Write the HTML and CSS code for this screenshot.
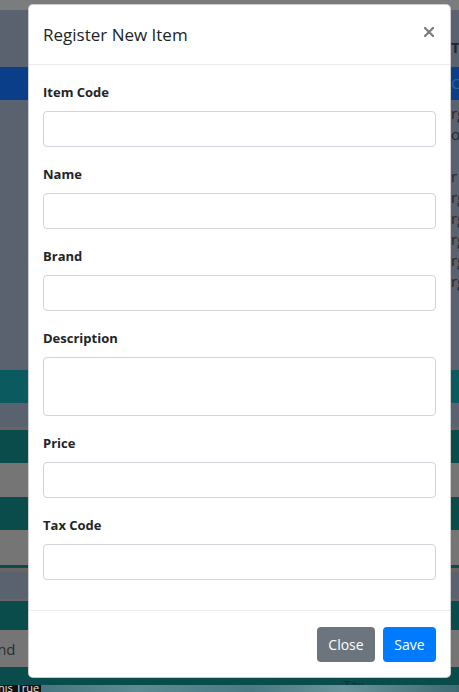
FILE: index.html
```html
<!DOCTYPE html>
<html>
<head>
<meta charset="utf-8">
<link rel="stylesheet" href="styles.css">
</head>
<body>
<div class="page">
  <div class="band gray-top"></div>
  <div class="band slate head-row"><span class="frag bold">T</span></div>
  <div class="band blue"><span class="frag light">C</span></div>
  <div class="band slate list">
    <span class="frag">rg</span>
    <span class="frag">or</span>
    <span class="frag">&nbsp;</span>
    <span class="frag">r</span>
    <span class="frag">rg</span>
    <span class="frag">rg</span>
    <span class="frag">rg</span>
    <span class="frag">rg</span>
    <span class="frag">rg</span>
  </div>
  <div class="band teal h33"></div>
  <div class="band slate h24"></div>
  <div class="band brown h3"></div>
  <div class="band dteal h33"></div>
  <div class="band gray h34"></div>
  <div class="band dteal h33"></div>
  <div class="band gray h35"></div>
  <div class="band dteal h3"></div>
  <div class="band brown h4"></div>
  <div class="band slate h27"></div>
  <div class="band brown h2"></div>
  <div class="band dteal h29"></div>
  <div class="band gray h37 cell"><span class="cut">Brand</span></div>
  <div class="band dteal h18"><span class="tax">Tax</span></div>
  <div class="band photo"><span class="tag">This True</span></div>
</div>

<div class="modal">
  <div class="modal-header">
    <h5 class="modal-title">Register New Item</h5>
    <button class="close" type="button" aria-label="Close">
      <svg width="10" height="10" viewBox="0 0 10 10"><path d="M1 1L9 9M9 1L1 9" stroke="#7a7a7a" stroke-width="2.2" stroke-linecap="square"/></svg>
    </button>
  </div>
  <div class="modal-body">
    <div class="form-group">
      <label>Item Code</label>
      <input class="form-control" type="text">
    </div>
    <div class="form-group">
      <label>Name</label>
      <input class="form-control" type="text">
    </div>
    <div class="form-group">
      <label>Brand</label>
      <input class="form-control" type="text">
    </div>
    <div class="form-group">
      <label>Description</label>
      <textarea class="form-control area"></textarea>
    </div>
    <div class="form-group">
      <label>Price</label>
      <input class="form-control" type="text">
    </div>
    <div class="form-group">
      <label>Tax Code</label>
      <input class="form-control" type="text">
    </div>
  </div>
  <div class="modal-footer">
    <button class="btn btn-secondary" type="button">Close</button>
    <button class="btn btn-primary" type="button">Save</button>
  </div>
</div>
</body>
</html>
```

FILE: styles.css
```css
* { box-sizing: border-box; }
html, body {
  margin: 0;
  padding: 0;
  width: 459px;
  height: 692px;
  overflow: hidden;
  font-family: "Open Sans", "Noto Sans", sans-serif;
}
.page {
  display: flex;
  flex-direction: column;
  width: 459px;
}
.band { width: 100%; overflow: hidden; white-space: nowrap; }
.gray-top { height: 10px; background: #7b7c7e; }
.slate { background: #5a626f; }
.blue { height: 33px; background: #0b3e89; }
.teal { background: #0b5a60; }
.dteal { background: #0a4b4c; }
.gray { background: #757576; }
.brown { background: #6a6465; }
.head-row { height: 57px; padding-top: 27px; }
.list { height: 270px; padding-top: 3px; display: flex; flex-direction: column; }
.h2 { height: 2px; } .h3 { height: 3px; } .h4 { height: 4px; }
.h18 { height: 18px; } .h24 { height: 24px; } .h27 { height: 27px; }
.h29 { height: 29px; } .h33 { height: 33px; } .h34 { height: 34px; }
.h35 { height: 35px; } .h37 { height: 37px; }
.frag {
  display: block;
  padding-left: 451px;
  font-size: 15px;
  line-height: 21px;
  color: #23272d;
}
.frag.bold { font-weight: 700; line-height: 20px; }
.blue .frag { line-height: 33px; color: #3b5f9a; }
.cell { display: flex; align-items: center; }
.cut { font-size: 15px; color: #2d2d2d; margin-left: -27px; }
.tax { display: block; padding-left: 344px; padding-top: 13px; font-size: 12px; line-height: 12px; color: #1a2a2a; }
.photo {
  height: 7px;
  background: linear-gradient(90deg, #3f6e78 0%, #5d8b94 30%, #4b7a84 55%, #6a949b 75%, #3f6a73 100%);
}
.tag {
  display: inline-block;
  background: #111;
  color: #e6e6e6;
  font-size: 11px;
  line-height: 12px;
  margin-top: -3px;
  padding: 0 2px 0 0;
  text-indent: -8px;
  vertical-align: top;
}

/* Modal */
.modal {
  position: absolute;
  left: 28px;
  top: 4px;
  width: 423px;
  background: #fff;
  border: 1px solid rgba(0,0,0,.2);
  border-radius: 5px;
  display: flex;
  flex-direction: column;
  color: #212529;
}
.modal-header {
  height: 60px;
  display: flex;
  align-items: center;
  justify-content: space-between;
  padding: 0 14px;
  border-bottom: 1px solid #e9ecef;
}
.modal-title {
  margin: 0;
  font-size: 17px;
  font-weight: 400;
  line-height: 24px;
  color: #212529;
  padding-top: 1px;
}
.close {
  border: 0;
  background: transparent;
  padding: 0;
  margin: -6px 2px 0 0;
  width: 10px;
  height: 10px;
  display: flex;
}
.modal-body {
  padding: 17px 14px 13px;
}
.form-group {
  margin-bottom: 17px;
  display: flex;
  flex-direction: column;
}
label {
  display: block;
  font-size: 13px;
  font-weight: 700;
  line-height: 20px;
  margin-bottom: 9px;
  color: #212529;
}
.form-control {
  display: block;
  width: 100%;
  height: 36px;
  border: 1px solid #ced4da;
  border-radius: 4px;
  background: #fff;
  padding: 6px 12px;
  font: inherit;
  margin: 0;
  resize: none;
  outline: none;
}
.area { height: 59px; }
.modal-footer {
  border-top: 1px solid #e9ecef;
  padding: 16px 14px 15px;
  display: flex;
  justify-content: flex-end;
  gap: 8px;
}
.btn {
  height: 35px;
  border: 0;
  border-radius: 4px;
  color: #fff;
  font-family: "Open Sans", "Noto Sans", sans-serif;
  font-size: 14px;
  padding: 0;
}
.btn-secondary { width: 58px; background: #6c757d; }
.btn-primary { width: 53px; background: #007bff; }
```
